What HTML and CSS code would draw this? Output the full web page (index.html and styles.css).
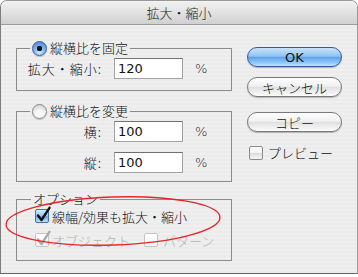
FILE: index.html
```html
<!DOCTYPE html>
<html>
<head>
    <title>拡大・縮小</title>
    <link rel="stylesheet" href="styles.css">
</head>
<body>

<div class="window">
  <div class="titlebar">拡大・縮小</div>

  <div class="content">
    <div class="groups">

      <fieldset class="group group-fixed">
        <legend><span class="radio on"></span>縦横比を固定</legend>
        <div class="fields">
          <label>拡大・縮小:</label>
          <input class="num" type="text" value="120">
          <span class="pct">%</span>
        </div>
      </fieldset>

      <fieldset class="group group-free">
        <legend><span class="radio"></span>縦横比を変更</legend>
        <div class="fields">
          <label>横:</label>
          <input class="num" type="text" value="100">
          <span class="pct">%</span>
          <label>縦:</label>
          <input class="num" type="text" value="100">
          <span class="pct">%</span>
        </div>
      </fieldset>

      <fieldset class="group group-options">
        <legend>オプション</legend>
        <div class="options">
          <div class="opt-row">
            <span class="check on">
              <svg width="17" height="18" viewBox="0 0 17 18"><path d="M3 9.5 L6.5 14 L14.5 1.8" /></svg>
            </span>
            線幅/効果も拡大・縮小
          </div>
          <div class="opt-row disabled">
            <span class="check on">
              <svg width="17" height="18" viewBox="0 0 17 18"><path d="M3 9.5 L6.5 14 L14.5 1.8" /></svg>
            </span>
            オブジェクト
            <span class="check second"></span>
            パターン
          </div>
        </div>
      </fieldset>

    </div>

    <div class="buttons">
      <button class="btn default">OK</button>
      <button class="btn cancel">キャンセル</button>
      <button class="btn copy">コピー</button>
      <div class="preview"><span class="check"></span>プレビュー</div>
    </div>
  </div>

  <!-- red marker drawn over the dialog -->
  <svg class="marker" width="358" height="277" viewBox="0 0 358 277">
    <ellipse cx="113" cy="220" rx="107" ry="24" transform="rotate(-2 113 220)" />
  </svg>
</div>

</body>
</html>
```

FILE: styles.css
```css
body {
    margin: 0;
    background-color: #fff;
    font-family: "Noto Sans CJK JP", sans-serif;
    font-size: 13px;
    font-weight: 300;
    color: #111;
}

.window {
    position: relative;
    width: 358px;
    height: 274px;
    box-sizing: border-box;
    border: 1px solid #9a9a9a;
    border-left-color: #7c7c7c;
    border-bottom-color: #666;
    border-radius: 7px 7px 0 0;
    overflow: hidden;
    background: repeating-linear-gradient(to bottom, #efefef 0, #efefef 2px, #ebebeb 2px, #ebebeb 4px);
}

.titlebar {
    height: 23px;
    line-height: 23px;
    text-align: center;
    font-size: 13px;
    color: #222;
    border-bottom: 1px solid #9c9c9c;
    background: linear-gradient(to bottom, #f2f2f2, #e2e2e2 50%, #d0d0d0);
}

.content {
    display: flex;
    gap: 15px;
    padding: 15px 0 0 15px;
}

.groups {
    width: 216px;
}

/* group boxes */
.group {
    margin: 0;
    padding: 2px 0 11px 0;
    border: 1px solid #8c8c8c;
    min-inline-size: 0;
}

.group legend {
    margin-left: 13px;
    padding: 0 2px;
    height: 16px;
    line-height: 16px;
    white-space: nowrap;
}

.group-free {
    margin-top: 12px;
    padding-bottom: 8px;
}

.group-options {
    margin-top: 9px;
    padding: 1px 0 12px 0;
}

.group-options legend {
    margin-left: 14px;
}

.fields {
    display: grid;
    grid-template-columns: 75px 69px auto;
    column-gap: 12px;
    row-gap: 10px;
    align-items: center;
    padding-left: 10px;
}

.fields label {
    text-align: right;
    letter-spacing: 1px;
}

.pct {
    font-family: "DejaVu Sans", sans-serif;
    color: #222;
}

.num {
    box-sizing: border-box;
    width: 69px;
    height: 21px;
    margin: 0;
    padding: 0 0 0 3px;
    border: 1px solid #a2a2a2;
    border-top-color: #707070;
    background: #fff;
    font-family: "DejaVu Sans", sans-serif;
    font-size: 13px;
    color: #111;
    outline: none;
}

/* aqua radio */
.radio {
    display: inline-block;
    vertical-align: middle;
    position: relative;
    top: -1px;
    width: 15px;
    height: 15px;
    margin-right: 3px;
    box-sizing: border-box;
    border-radius: 50%;
    border: 1px solid #8a8a8a;
    background: radial-gradient(circle at 50% 75%, #ffffff 0, #f4f4f4 40%, #c8c8c8 100%);
    box-shadow: 0 1px 1px rgba(0, 0, 0, 0.2);
}

.radio.on {
    border-color: #3c5f98;
    background: radial-gradient(circle at 50% 50%, #111 0, #111 2.5px, transparent 3px),
                radial-gradient(circle at 50% 80%, #cdeaff 0, #7ab6f0 45%, #3d7fd0 100%);
}

/* option rows */
.options {
    padding-left: 18px;
}

.opt-row {
    display: flex;
    align-items: center;
    height: 16px;
}

.opt-row + .opt-row {
    margin-top: 8px;
}

.opt-row.disabled {
    color: #b4b4b4;
}

.check {
    position: relative;
    display: inline-block;
    width: 14px;
    height: 14px;
    margin-right: 3px;
    box-sizing: border-box;
    border: 1px solid #8a8a8a;
    border-radius: 2px;
    background: linear-gradient(to bottom, #fff, #f0f0f0 50%, #dcdcdc 51%, #f6f6f6);
    flex: none;
}

.check.on {
    border-color: #4a6ea8;
    background: linear-gradient(to bottom, #d4ecff, #94c6f4 50%, #6aa8ea 51%, #b8e0ff);
}

.check svg {
    position: absolute;
    left: -1px;
    top: -4px;
}

.check path {
    fill: none;
    stroke: #111;
    stroke-width: 2.4;
    stroke-linecap: round;
    stroke-linejoin: round;
}

.disabled .check {
    border-color: #c6c6c6;
    background: linear-gradient(to bottom, #fff, #f2f2f2);
}

.disabled .check path {
    stroke: #aaa;
}

.check.second {
    margin-left: 14px;
    margin-right: 5px;
}

/* right column */
.buttons {
    width: 95px;
    margin-top: 7px;
    display: flex;
    flex-direction: column;
}

.btn {
    height: 20px;
    margin: 0;
    padding: 0;
    border: 1px solid #7a7a7a;
    border-radius: 10px;
    font-family: "Noto Sans CJK JP", sans-serif;
    font-size: 13px;
    font-weight: 300;
    line-height: 17px;
    color: #111;
    background: linear-gradient(to bottom, #fdfdfd, #f1f1f1 45%, #e0e0e0 52%, #f3f3f3 85%, #fff);
    box-shadow: 0 1px 1px rgba(0, 0, 0, 0.25);
}

.btn.default {
    font-family: "DejaVu Sans", sans-serif;
    font-weight: normal;
    border-color: #37599a;
    background: linear-gradient(to bottom, #c9e3fb, #92c4f3 45%, #62a2e8 52%, #92cdfa 85%, #c4e8ff);
}

.btn.cancel {
    margin-top: 10px;
}

.btn.copy {
    margin-top: 15px;
}

.preview {
    display: flex;
    align-items: center;
    margin: 11px 0 0 2px;
}

.preview .check {
    margin-right: 5px;
}

.marker {
    position: absolute;
    left: -1px;
    top: 0;
    pointer-events: none;
}

.marker ellipse {
    fill: none;
    stroke: #e8262a;
    stroke-width: 1.4;
}
```
